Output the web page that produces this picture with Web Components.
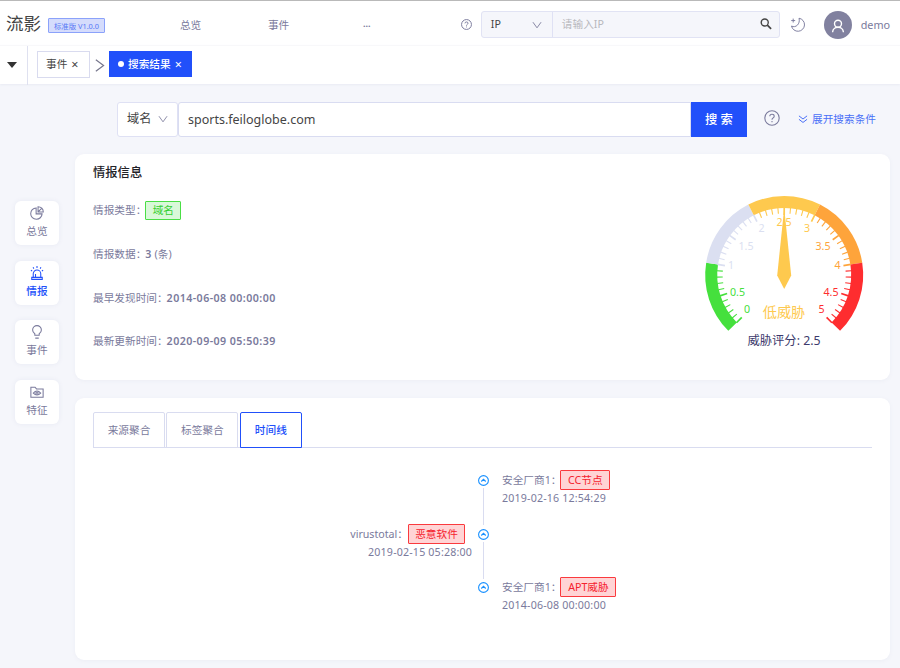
<!DOCTYPE html>
<html lang="zh-CN">
<head>
<meta charset="utf-8">
<title>流影</title>
<style>
html,body{margin:0;height:100%}
body{width:900px;height:668px;overflow:hidden;background:#f5f6fb;color:#7a7a9c;font:10.67px/16px "Noto Sans","Noto Sans CJK SC",sans-serif}
</style>
</head>
<body>
<flow-app></flow-app>
<script>
const define = (name, html, setup) => customElements.define(name, class extends HTMLElement {
  connectedCallback() {
    if (this.shadowRoot) return;
    const t = document.createElement('template');
    t.innerHTML = '<style>*{box-sizing:border-box}:host{box-sizing:border-box;white-space:nowrap}svg{display:block;flex:none}</style>' + html;
    const root = this.attachShadow({mode: 'open'});
    root.append(t.content.cloneNode(true));
    if (setup) setup(this, root);
  }
});

const icons = {
  help: '<circle cx="8" cy="8" r="7.2"/><path d="M5.8 6.3Q5.8 4.3 8 4.3T10.2 6.2Q10.2 7.2 9 7.9Q8 8.4 8 9.7M8 11v1.2"/>',
  down: '<path d="M1.5 3.5L8 12.500L14.5 3.5"/>',
  double: '<path d="M1.5 3L8 8L14.5 3M1.5 8.5L8 13.5L14.5 8.5"/>',
  right: '<path d="M3.5 1L13 8L3.5 15"/>',
  search: '<circle cx="6.3" cy="6" r="4.7"/><path d="M9.8 9.6L14.8 14.5" stroke-width="2.2"/>',
  moon: '<path d="M9.6 1.3A7 7 0 1 1 1.6 9.6C6 12.2 11.3 7.3 9.6 1.3ZM3.4 1.7v4.2M1.3 3.8h4.2"/>',
  user: '<circle cx="8" cy="5.4" r="4"/><path d="M1.8 15.2C2.2 7.6 13.8 7.6 14.2 15.2"/>',
  pie: '<path d="M7 2.2A6.5 6.5 0 1 0 13.8 9H7ZM9.2.8V6.8H15.2A6 6 0 0 0 9.2.8ZM9.2 6.8L13.4 2.6"/>',
  alarm: '<path d="M3.7 13V8.800a4.3 4.3 0 0 1 8.600 0V13M2 13h12v2.300H2ZM6.300 12.500V9.200M8 0v2.200M3.500 1.500l.9 1.500M12.500 1.500l-.9 1.500M1 4.800l1.500.9M15 4.800l-1.500.9"/>',
  bulb: '<path d="M5.500 11.7V10Q3 8.4 3 5.7a5 5 0 0 1 10 0Q13 8.4 10.500 10v1.7ZM6 15h4"/>',
  folder: '<path d="M1 14V2.500h4.8l1.6 2H15v9.500Z"/><path d="M3.800 9.200q4.200-4.500 8.400 0q-4.200 4.500-8.400 0Z"/><circle cx="8" cy="9.200" r="1.3"/>'
};
define('flow-icon', '<style>:host{display:block;flex:none}svg{width:100%;height:100%;fill:none;stroke:currentColor;stroke-width:var(--w,1.2)}</style><svg viewBox="0 0 16 16"></svg>',
  (el, root) => { root.querySelector('svg').innerHTML = icons[el.getAttribute('name')]; });

define('flow-header', `<style>
:host{display:flex;align-items:center;height:45px;border-top:1px solid #b9b9b9;background:#fff;padding:3px 10px 0 6px}
.brand{font-size:17.5px;line-height:24px;color:#444;width:42px;margin-top:-3px}
.ver{width:57px;height:15px;border:1px solid #8ba2fa;background:#d5dcfc;border-radius:1px;color:#5678f5;font-size:7.4px;line-height:14px;text-align:center;margin-top:1px}
nav{display:flex;margin-left:75px;width:281px;margin-top:1px}
nav span{width:88px}nav span+span+span{padding-left:7px;font-size:9px;line-height:17px;font-weight:700}
.group{display:flex;width:299px;height:27px;border:1px solid #e1e3f4;border-radius:3px;background:#f5f6fb;margin-left:9px;align-items:center;line-height:25px}
.type{display:flex;align-items:center;justify-content:space-between;width:71px;height:25px;border-right:1px solid #dfe1f4;padding:0 10px 0 9px;color:#444}
.ph{flex:1;padding-left:9px;color:#b8b8bd}
.avatar{width:28px;height:28px;border-radius:50%;background:#81819f;color:#fff;padding:8px 7px 0;margin-left:19px}
</style>
<span class="brand">流影</span><span class="ver">标准版 V1.0.0</span>
<nav><span>总览</span><span>事件</span><span>···</span></nav>
<flow-icon name="help" style="width:11px;height:11px;--w:1.4"></flow-icon>
<div class="group"><div class="type"><span>IP</span><flow-icon name="down" style="width:10px;height:10px;color:#8888a5;--w:1.6"></flow-icon></div><span class="ph">请输入IP</span><flow-icon name="search" style="width:12px;height:12px;margin:-2px 7px 0 0;color:#444;--w:1.8"></flow-icon></div>
<flow-icon name="moon" style="width:15px;height:15px;margin-left:10px;--w:1"></flow-icon>
<div class="avatar"><flow-icon name="user" style="width:14px;height:14px;--w:1.6"></flow-icon></div><span style="margin-left:9px;font-size:10.8px">demo</span>`);

define('flow-crumbs', `<style>
:host{display:flex;align-items:center;height:39px;background:#fff;border-top:1px solid #f8f8fa;box-shadow:0 1px 2px #e9ebf3}
.menu{width:28px;height:39px;border-right:1px solid #dfe1f0;display:flex;align-items:center;padding-left:7px}
.menu:before{content:"";border:5.5px solid transparent;border-top:6px solid #333;border-bottom:0}
.tab{height:27px;border:1px solid #d9dbef;line-height:25px;width:53px;margin:-2px 0 0 9px;padding-left:8px;color:#444;display:flex}
.tab b{font-weight:400;margin-left:4px;font-size:12.5px}
.tab.on{height:26px;background:#2150fa;border-color:#2150fa;color:#fff;width:83px;margin-left:3px;align-items:center;padding-left:8px;font-weight:500}
.on:before{content:"";width:6px;height:6px;border-radius:50%;background:#fff;margin-right:4px}
</style><div class="menu"></div><div class="tab">事件<b>×</b></div><flow-icon name="right" style="width:13px;height:13px;margin-left:3px;color:#77778d;--w:1.5"></flow-icon><div class="tab on">搜索结果<b>×</b></div>`);

define('flow-search', `<style>
:host{display:flex;align-items:center;height:35px}
.sel{width:61px;height:35px;border:1px solid #dfe1f4;border-radius:3px;background:#fff;display:flex;align-items:center;padding:0 9px;justify-content:space-between;font-size:12.2px;color:#444}
.q{width:513px;height:35px;border:1px solid #d9dcf1;border-radius:3px 0 0 3px;background:#fff;color:#444;font-size:12.5px;line-height:33px;padding-left:9px}
button{width:56px;height:35px;border:0;background:#2150fa;color:#fff;font:500 12.3px/35px "Noto Sans","Noto Sans CJK SC",sans-serif;padding:0}
.more{display:flex;align-items:center;color:#4a70f7;margin-left:18px;gap:4px}
</style><div class="sel">域名<flow-icon name="down" style="width:10px;height:10px;color:#8888a5;--w:1.5"></flow-icon></div><div class="q">sports.feiloglobe.com</div><button>搜 索</button><flow-icon name="help" style="width:16px;height:16px;margin:-3px 0 0 17px;--w:1.1"></flow-icon><div class="more"><flow-icon name="double" style="width:10px;height:10px;--w:1.6"></flow-icon>展开搜索条件</div>`);

define('flow-side', `<style>
:host{display:flex;flex-direction:column;align-items:center;width:44px;height:44px;border-radius:6px;background:#fff;box-shadow:0 0 5px #e7e9f2;padding-top:5px}
:host([active]){color:#2150fa;font-weight:500}
flow-icon{width:14px;height:14px;margin-bottom:3px}
</style><flow-icon></flow-icon><slot></slot>`, (el, root) => {
  const i = document.createElement('flow-icon'); i.setAttribute('name', el.getAttribute('icon')); root.querySelector('flow-icon').replaceWith(i);
});

define('flow-card', `<style>:host{display:block;background:#fff;border-radius:9px;box-shadow:0 1px 4px #eceef5;width:815px}</style><slot></slot>`);

define('flow-tag', `<style>
:host{display:inline-block;height:20px;line-height:18px;border:1px solid #fa3a3e;border-radius:1px;background:#ffd4d5;color:#f5222d;text-align:center}
:host([green]){border-color:#4ade45;background:#d9f8d9;color:#35cf31;height:19px;line-height:17px}
</style><slot></slot>`);

define('flow-gauge', `<style>:host{display:block}svg{font-family:"Noto Sans","Noto Sans CJK SC",sans-serif;font-size:10.67px}</style><svg width="190" height="170" viewBox="690 185 190 170"></svg>`, (el, root) => {
  const cx = 784.2, cy = 275, colors = ['#45e03d', '#dbdff1', '#fec94e', '#fea43b', '#fe2d2f'];
  const at = (v, r) => { const a = (225 - v * 54) * Math.PI / 180; return (cx + r * Math.cos(a)).toFixed(2) + ' ' + (cy - r * Math.sin(a)).toFixed(2); };
  const tone = v => v === 1 ? colors[1] : colors[Math.max(0, Math.ceil(v) - 1)];
  let s = '';
  colors.forEach((c, i) => { s += `<path d="M${at(i, 73)}A73 73 0 0 1 ${at(i + 1, 73)}" fill="none" stroke="${c}" stroke-width="12"/>`; });
  for (let i = 0; i <= 50; i++) s += `<path d="M${at(i / 10, 67.5)}L${at(i / 10, i % 5 ? 61.5 : 60)}" stroke="${tone(i / 10)}" stroke-width="${i % 5 ? 1.1 : 1.7}"/>`;
  [[747,309],[737.5,291.5],[731,265],[746,246],[761.5,228],[784,222],[807,228],[823,246],[837.5,265],[831,291.5],[821.5,309]].forEach(([x, y], i) => {
    s += `<text x="${x}" y="${y + 4}" text-anchor="middle" fill="${tone(i / 2)}">${i / 2}</text>`;
  });
  s += `<path d="M784.2 208L791.2 275.500L784.2 289L777.2 275.500Z" fill="#fec94e"/>
  <text x="784" y="316.500" text-anchor="middle" font-size="14.2" fill="#fec94e">低威胁</text>
  <text x="784" y="345" text-anchor="middle" font-size="12.3" fill="#3c3a6c">威胁评分: 2.5</text>`;
  root.querySelector('svg').innerHTML = s;
});

define('flow-info', `<style>
:host{display:flex;justify-content:space-between;height:226px;padding:11px 10px 0 18px}
h3{margin:0;font-size:12.3px;line-height:16px;font-weight:500;color:#222228}
p{margin:0;height:20px;line-height:20px;display:flex;align-items:center}
.rows{display:flex;flex-direction:column;gap:23.8px;margin-top:19px}
b{font-weight:600;letter-spacing:.44px;margin-left:-1px}
flow-gauge{margin-top:20px}
</style><div><h3>情报信息</h3><div class="rows"><p>情报类型：<flow-tag green style="width:36px;margin-left:-1px">域名</flow-tag></p><p>情报数据：<b>3</b>&nbsp;(条)</p><p>最早发现时间：<b>2014-06-08 00:00:00</b></p><p>最新更新时间：<b>2020-09-09 05:50:39</b></p></div></div><flow-gauge></flow-gauge>`);

define('flow-tabs', `<style>
:host{display:flex;gap:2px;height:36px;border-bottom:1px solid #d9dcf0}
span{height:36px;width:72px;border:1px solid #d9dcf0;border-radius:2px 2px 0 0;line-height:34px;text-align:center}
span+span{margin-left:-.6px}
.on{width:62px;color:#2150fa;border-color:#2150fa;font-weight:500}
</style><span>来源聚合</span><span>标签聚合</span><span class="on">时间线</span>`);

define('flow-event', `<style>
:host{display:grid;grid-template-columns:379px 11px 1fr;height:53.5px}
.body{grid-column:3;grid-row:1;padding-left:13px}
:host([left]) .body{grid-column:1;padding:0 6px 0 0;text-align:right}
.line{display:flex;align-items:center;height:20px}
:host([left]) .line{justify-content:flex-end;padding-right:7px}
.time{line-height:16px;letter-spacing:.17px}
.axis{grid-column:2;grid-row:1;display:flex;flex-direction:column;align-items:center;padding-top:5px;gap:2px;color:#1890ff}
.axis:after{content:"";width:1.5px;height:37px;background:#d9dcf0}
:host([last]) .axis:after{display:none}
</style><div class="axis"><svg width="11" height="11" viewBox="0 0 11 11" fill="none" stroke="currentColor" stroke-width="1.1"><circle cx="5.5" cy="5.5" r="4.9"/><path d="M3.3 6.500L5.500 4.300L7.700 6.500"/></svg></div><div class="body"><div class="line"><slot></slot></div><div class="time"><slot name="time"></slot></div></div>`);

define('flow-app', `<style>
:host{display:flex;flex-direction:column;height:668px}
flow-search{margin:17.5px 0 0 117px}
main{display:flex;margin-top:17.5px}
aside{display:flex;flex-direction:column;gap:15.500px;width:75px;padding:47px 0 0 15px}
.cards{display:flex;flex-direction:column;gap:18px}
.timeline{padding:14px 18px 0;height:262px}
.events{padding:22.4px 0 0 6px}
</style><flow-header></flow-header><flow-crumbs></flow-crumbs><flow-search></flow-search>
<main><aside><flow-side icon="pie">总览</flow-side><flow-side icon="alarm" active>情报</flow-side><flow-side icon="bulb">事件</flow-side><flow-side icon="folder">特征</flow-side></aside>
<div class="cards"><flow-card><flow-info></flow-info></flow-card>
<flow-card><div class="timeline"><flow-tabs></flow-tabs><div class="events">
<flow-event>安全厂商1：<flow-tag style="width:50px;margin-left:-1px">CC节点</flow-tag><span slot="time">2019-02-16 12:54:29</span></flow-event>
<flow-event left>virustotal：<flow-tag style="width:57px">恶意软件</flow-tag><span slot="time">2019-02-15 05:28:00</span></flow-event>
<flow-event last>安全厂商1：<flow-tag style="width:56px;margin-left:-1px">APT威胁</flow-tag><span slot="time">2014-06-08 00:00:00</span></flow-event>
</div></div></flow-card></div></main>`);
</script>
</body>
</html>
